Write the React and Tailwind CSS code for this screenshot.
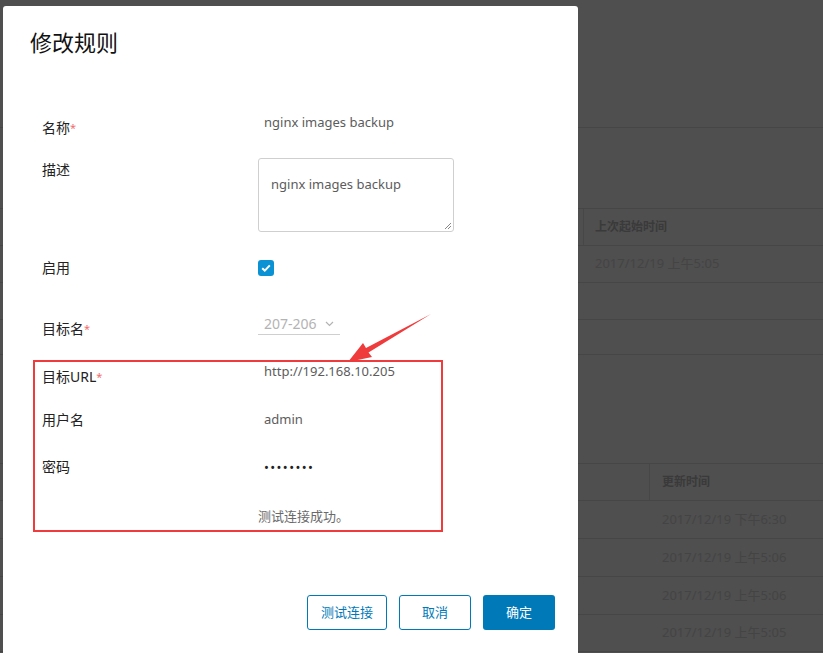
import React from 'react';

const font = { fontFamily: '"Noto Sans", "Noto Sans CJK SC", sans-serif' };

const Req = () => <span className="text-[#f26d6d] text-[11px] align-top">*</span>;

const FormRow = ({ h, label, labelTop = 0, children }) => (
  <div className="flex" style={{ height: h }}>
    <div className="w-[216px] shrink-0 text-[14px] leading-[20px] text-[#222]" style={{ marginTop: labelTop }}>
      {label}
    </div>
    <div className="flex-1">{children}</div>
  </div>
);

const BgRow = ({ h, children, className = '' }) => (
  <div className={`border-b border-[#464646] ${className}`} style={{ height: h }}>
    {children}
  </div>
);

export default function App() {
  return (
    <div className="relative w-[823px] h-[653px] overflow-hidden bg-[#4f4f4f]" style={font}>
      {/* dimmed page behind the dialog */}
      <div className="flex flex-col">
        <BgRow h={128} />
        <BgRow h={81} />
        <BgRow h={37} className="flex items-center pl-[583px]">
          <div className="h-full border-l border-[#474747] pl-[11px] flex items-center text-[12px] font-bold text-[#3a3a3a]">
            上次起始时间
          </div>
        </BgRow>
        <BgRow h={37} className="flex items-center pl-[595px] text-[13px] text-[#444]">2017/12/19 上午5:05</BgRow>
        <BgRow h={37} />
        <BgRow h={35} />
        <BgRow h={109} />
        <BgRow h={37} className="flex items-center pl-[649px]">
          <div className="h-full border-l border-[#474747] pl-[12px] flex items-center text-[12px] font-bold text-[#3a3a3a]">
            更新时间
          </div>
        </BgRow>
        {['2017/12/19 下午6:30', '2017/12/19 上午5:06', '2017/12/19 上午5:06', '2017/12/19 上午5:05'].map((d, i) => (
          <BgRow key={i} h={i === 3 ? 37 : 38} className="flex items-center pl-[662px] text-[13px] text-[#444]">
            {d}
          </BgRow>
        ))}
      </div>

      {/* dialog */}
      <div className="absolute left-[3px] top-[6px] w-[575px] h-[700px] bg-white rounded-[3px] pl-[39px] pr-[23px]">
        <div className="-ml-[12px] pt-[22px] text-[22px] leading-[28px] text-[#111]">修改规则</div>

        <div className="mt-[56px] flex flex-col">
          <FormRow h={46} labelTop={6} label={<>名称<Req /></>}>
            <div className="pl-[6px] text-[13px] leading-[20px] text-[#5c5c5c]">nginx images backup</div>
          </FormRow>
          <FormRow h={100} labelTop={2} label="描述">
            <div className="relative w-[196px] h-[74px] border border-[#cfcfcf] rounded-[3px] pl-[12px] pt-[15px] text-[13px] leading-[20px] text-[#5c5c5c]">
              nginx images backup
              <svg className="absolute right-[2px] bottom-[2px]" width="7" height="7" viewBox="0 0 7 7">
                <path d="M1 7 L7 1 M4 7 L7 4" stroke="#888" strokeWidth="1" />
              </svg>
            </div>
          </FormRow>
          <FormRow h={56} labelTop={0} label="启用">
            <div className="mt-[2px] w-[16px] h-[16px] rounded-[3px] bg-[#0a92d4] flex items-center justify-center">
              <svg width="10" height="8" viewBox="0 0 10 8">
                <path d="M1.2 4.2 L3.8 6.6 L8.8 1.4" stroke="#fff" strokeWidth="2" fill="none" />
              </svg>
            </div>
          </FormRow>
          <FormRow h={47} labelTop={5} label={<>目标名<Req /></>}>
            <div className="w-[82px] h-[21px] border-b border-[#cfcfcf] flex items-center gap-[8px] pl-[6px] text-[14px] leading-[20px] text-[#b3b3b3]">
              207-206
              <svg width="9" height="6" viewBox="0 0 9 6">
                <path d="M1 1 L4.5 4.5 L8 1" stroke="#b3b3b3" strokeWidth="1.2" fill="none" />
              </svg>
            </div>
          </FormRow>
          <FormRow h={48} labelTop={6} label={<>目标URL<Req /></>}>
            <div className="pl-[6px] text-[13px] leading-[20px] text-[#5c5c5c]">http://192.168.10.205</div>
          </FormRow>
          <FormRow h={48} labelTop={1} label="用户名">
            <div className="pl-[6px] text-[13px] leading-[20px] text-[#5c5c5c]">admin</div>
          </FormRow>
          <FormRow h={49} labelTop={0} label="密码">
            <div className="pl-[6px] text-[13px] leading-[20px] text-[#222] tracking-[1.4px]">••••••••</div>
          </FormRow>
          <FormRow h={40} label="">
            <div className="text-[13px] leading-[20px] text-[#6a6a6a]">测试连接成功。</div>
          </FormRow>
        </div>

        <div className="mt-[49px] flex justify-end gap-[12px]">
          <button className="w-[80px] h-[35px] rounded-[3px] border border-[#0079b8] text-[#0079b8] text-[13px] bg-white">测试连接</button>
          <button className="w-[72px] h-[35px] rounded-[3px] border border-[#0079b8] text-[#0079b8] text-[13px] bg-white">取消</button>
          <button className="w-[72px] h-[35px] rounded-[3px] bg-[#0079b8] text-white text-[13px]">确定</button>
        </div>

        {/* annotation box */}
        <div className="absolute left-[30px] top-[354px] w-[410px] h-[172px] border-2 border-[#ef3b3b]" />
      </div>

      {/* annotation arrow */}
      <svg className="absolute left-0 top-0 pointer-events-none" width="823" height="653">
        <polygon points="348,362 363,343 366,348 431,314 368.5,352.5 372,357" fill="#ef3b3b" />
      </svg>
    </div>
  );
}
